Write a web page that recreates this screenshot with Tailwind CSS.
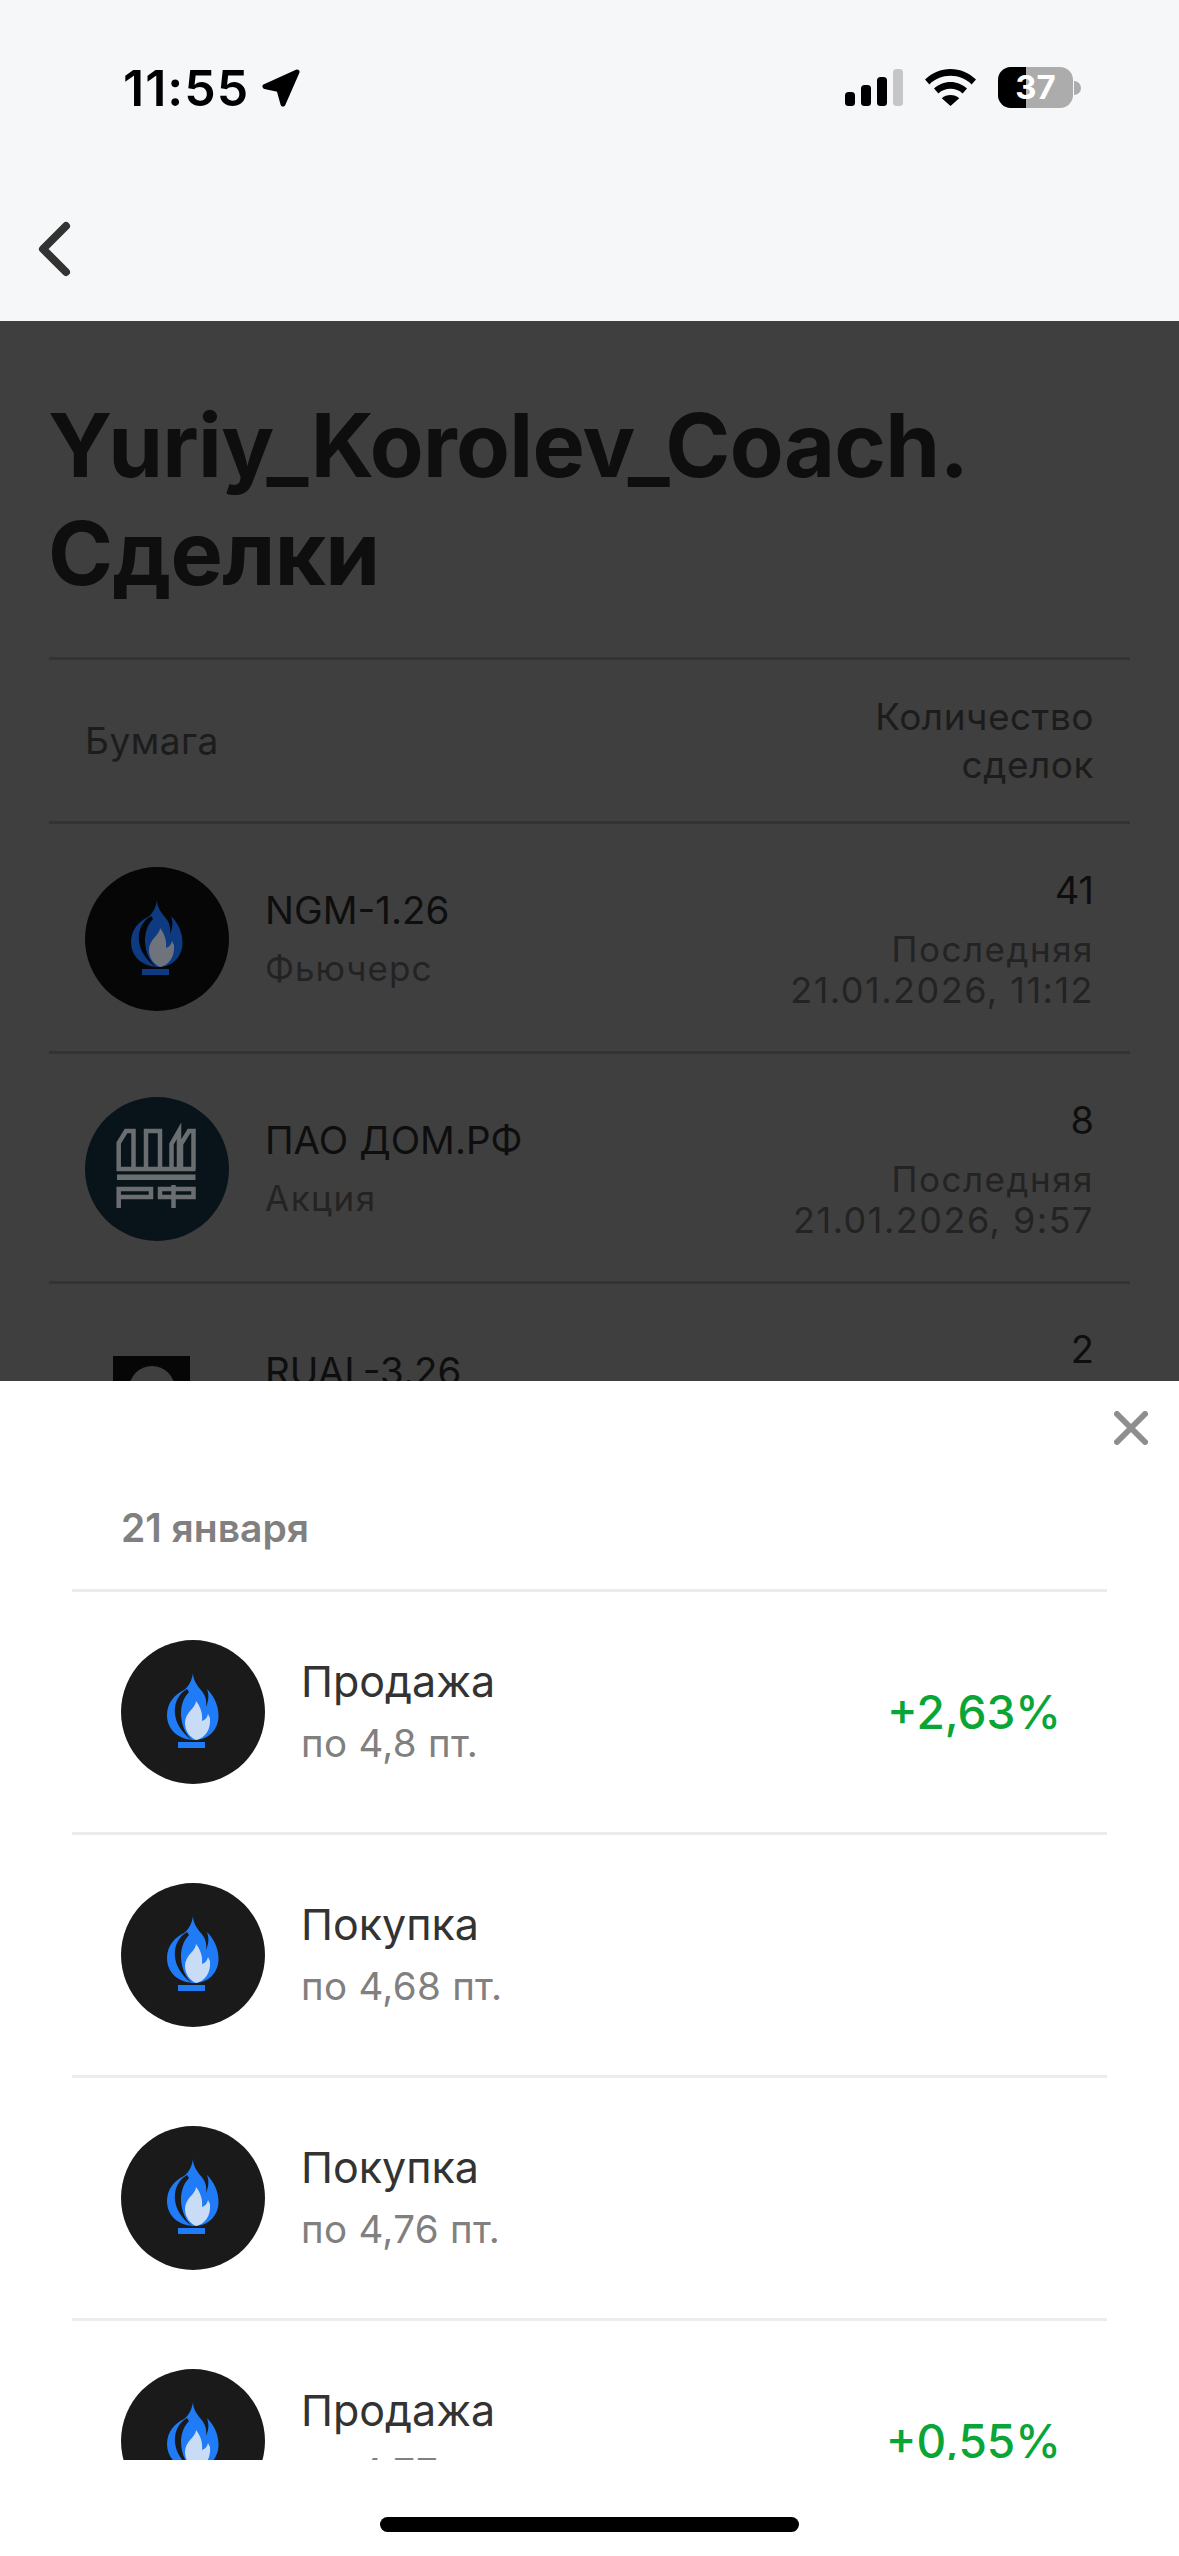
<!DOCTYPE html>
<html lang="ru">
<head>
  <meta charset="UTF-8" />
  <meta name="viewport" content="width=device-width, initial-scale=1.0" />
  <title>Сделки</title>
  <script src="https://cdn.jsdelivr.net/npm/@tailwindcss/browser@4"></script>
</head>
<body class="font-['Inter',sans-serif] bg-[#3f3f3f]">

  <svg class="hidden">
    <symbol id="flame" viewBox="0 0 144 144">
      <path fill="#1f7bf6" d="M72 33C72 40 76 45 79 49C84 54 86 60 85 67C88 60 88 55 86 49C93 56 98 66 97.5 77C97 90 87 100 74 100C58 100 46 90 46 75C46 63 54 54 63 50C68 46 71 40 72 33Z"/>
      <path fill="#1a1a1a" d="M66 49C50 58 48 84 71 100C58 88 56 64 68 52Z"/>
      <path fill="#c9dcf5" d="M75 61C75 68 64 72 64 83C64 92 70 98 75 100C84 98 90 90 89 78C88 76 87.5 75 87 74C86 78 84 80 81 81C82 73 79 66 75 61Z"/>
      <rect x="57" y="102" width="27" height="6" fill="#1f7bf6"/>
    </symbol>
    <symbol id="flame-dim" viewBox="0 0 144 144">
      <path fill="#0d3a80" d="M72 33C72 40 76 45 79 49C84 54 86 60 85 67C88 60 88 55 86 49C93 56 98 66 97.5 77C97 90 87 100 74 100C58 100 46 90 46 75C46 63 54 54 63 50C68 46 71 40 72 33Z"/>
      <path fill="#060606" d="M66 49C50 58 48 84 71 100C58 88 56 64 68 52Z"/>
      <path fill="#6f747c" d="M75 61C75 68 64 72 64 83C64 92 70 98 75 100C84 98 90 90 89 78C88 76 87.5 75 87 74C86 78 84 80 81 81C82 73 79 66 75 61Z"/>
      <rect x="57" y="102" width="27" height="6" fill="#0d3a80"/>
    </symbol>
  </svg>

  <div class="relative flex flex-col w-[1179px] h-[2556px] overflow-hidden">

    <!-- top bar -->
    <header class="h-[321px] shrink-0 bg-[#f6f7f9] relative">
      <div class="flex items-center justify-between h-[41px] absolute top-[67px] left-[123px] w-[958px]">
        <div class="flex items-center gap-[12px]">
          <span class="text-[50px] leading-none font-semibold text-black tracking-[1px]">11:55</span>
          <svg width="40" height="40" viewBox="0 0 40 40"><path fill="#000" stroke="#000" stroke-width="5" stroke-linejoin="round" d="M36 4L4 18.5L18 21.5L22 36Z"/></svg>
        </div>
        <div class="flex items-center">
          <svg width="58" height="37" viewBox="0 0 58 37" class="mr-[22px]">
            <rect x="0" y="23" width="10" height="14" rx="3.5" fill="#000"/>
            <rect x="16" y="16" width="10" height="21" rx="3.5" fill="#000"/>
            <rect x="32" y="8" width="10" height="29" rx="3.5" fill="#000"/>
            <rect x="48" y="0" width="10" height="37" rx="3.5" fill="#c6c6c8"/>
          </svg>
          <svg width="51" height="37" viewBox="0 0 51 37" class="mr-[22px]">
            <path fill="#000" d="M25.5 0C35 0 44 3.8 51 10.6L46.6 15.4C41 9.8 33.6 6.8 25.5 6.8S10 9.8 4.4 15.4L0 10.6C7 3.8 16 0 25.5 0Z"/>
            <path fill="#000" d="M25.5 13C31.8 13 37.4 15.4 42 19.6L37.6 24.4C34.3 21.4 30 19.8 25.5 19.8S16.7 21.4 13.4 24.4L9 19.6C13.6 15.4 19.2 13 25.5 13Z"/>
            <path fill="#000" d="M25.5 26C28.8 26 31.8 27.2 34.2 29.2L25.5 37L16.8 29.2C19.2 27.2 22.2 26 25.5 26Z"/>
          </svg>
          <div class="relative w-[75px] h-[41px] rounded-[13px] bg-[#acacac] overflow-hidden">
            <div class="w-[28px] h-full bg-black"></div>
            <span class="absolute inset-0 flex items-center justify-center text-[33px] leading-none font-bold text-white">37</span>
          </div>
          <div class="w-[7px] h-[14px] rounded-r-full bg-[#acacac] ml-[1px]"></div>
        </div>
      </div>
      <svg class="absolute left-[36px] top-[219px]" width="38" height="60" viewBox="0 0 38 60"><path fill="none" stroke="#333" stroke-width="8" stroke-linecap="round" stroke-linejoin="round" d="M30 7L7 30L30 53"/></svg>
    </header>

    <!-- dimmed page -->
    <main class="flex-1 px-[49px] pt-[70px] bg-[#3f3f3f]">
      <h1 class="ml-[-1px] text-[88px] leading-[108px] font-bold text-[#0e0e0e] tracking-[-0.7px]">Yuriy_Korolev_Coach.<br>Сделки</h1>

      <div class="mt-[50px] border-t-[3px] border-[#333333]">
        <div class="flex items-center justify-between h-[164px] px-[36px] border-b-[3px] border-[#333333] text-[37px] leading-[48px] text-[#1c1c1c] tracking-[0.5px]">
          <span>Бумага</span>
          <span class="text-right">Количество<br>сделок</span>
        </div>

        <div class="flex items-center h-[230px] pt-[3px] px-[36px] border-b-[3px] border-[#333333]">
          <div class="w-[144px] h-[144px] rounded-full bg-[#060606] shrink-0">
            <svg class="w-full h-full"><use href="#flame-dim"/></svg>
          </div>
          <div class="ml-[36px] flex-1">
            <div class="text-[38.5px] leading-[50px] text-[#0e0e0e]">NGM-1.26</div>
            <div class="mt-[8px] text-[35px] leading-[50px] text-[#232323] tracking-[1px]">Фьючерс</div>
          </div>
          <div class="text-right pb-[3px]">
            <div class="text-[38px] leading-[50px] text-[#0e0e0e]">41</div>
            <div class="mt-[14px] text-[35px] leading-[41px] text-[#232323] tracking-[1.5px]">Последняя</div>
            <div class="text-[36px] leading-[41px] text-[#232323] tracking-[1.5px]">21.01.2026, 11:12</div>
          </div>
        </div>

        <div class="flex items-center h-[230px] pt-[3px] px-[36px] border-b-[3px] border-[#333333]">
          <div class="w-[144px] h-[144px] rounded-full bg-[#08141a] shrink-0">
            <svg class="w-full h-full" viewBox="0 0 144 144" fill="none" stroke="#6b6e70" stroke-width="4.5">
              <path d="M33.7 72V46L41 34H48.5V72ZM61 34H75V72H61ZM86.5 72V47L94 34V72M96 72V47L104 34H108.5V72M32 72H110.5"/>
              <rect x="32" y="77.5" width="78.5" height="5.5" fill="#6b6e70" stroke="none"/>
              <path d="M33.7 111V92H66V100H33.7M75 92H108.5V100H75ZM88.5 88V111"/>
            </svg>
          </div>
          <div class="ml-[36px] flex-1">
            <div class="text-[38.5px] leading-[50px] text-[#0e0e0e]">ПАО ДОМ.РФ</div>
            <div class="mt-[8px] text-[35px] leading-[50px] text-[#232323] tracking-[1.5px]">Акция</div>
          </div>
          <div class="text-right pb-[3px]">
            <div class="text-[38px] leading-[50px] text-[#0e0e0e]">8</div>
            <div class="mt-[14px] text-[35px] leading-[41px] text-[#232323] tracking-[1.5px]">Последняя</div>
            <div class="text-[36px] leading-[41px] text-[#232323] tracking-[1.5px]">21.01.2026, 9:57</div>
          </div>
        </div>

        <div class="flex h-[230px] px-[36px]">
          <div class="w-[144px] shrink-0 pl-[28px] pt-[72px]">
            <div class="w-[77px] h-[77px] bg-[#060606] pt-[10px] flex justify-center">
              <div class="w-[46px] h-[46px] rounded-full bg-[#3f3f3f]"></div>
            </div>
          </div>
          <div class="ml-[36px] flex-1 pt-[62px]">
            <div class="text-[38.5px] leading-[50px] text-[#0e0e0e]">RUAL-3.26</div>
          </div>
          <div class="text-right pt-[40px]">
            <div class="text-[38px] leading-[50px] text-[#0e0e0e]">2</div>
          </div>
        </div>
      </div>
    </main>

    <!-- bottom sheet -->
    <section class="absolute left-0 right-0 bottom-0 h-[1175px] bg-white flex flex-col">
      <div class="relative h-[208px] shrink-0 px-[72px]">
        <svg class="absolute left-[1114px] top-[30px]" width="34" height="34" viewBox="0 0 34 34"><path stroke="#8e8e8e" stroke-width="6" stroke-linecap="round" d="M3 3L31 31M31 3L3 31"/></svg>
        <div class="pl-[49px] pt-[125px] text-[39px] leading-[44px] font-semibold text-[#808080]">21 января</div>
      </div>

      <div class="h-[871px] shrink-0 mx-[72px] overflow-hidden border-t-[3px] border-[#ececec]">
        <div class="flex items-center h-[243px] px-[49px] border-b-[3px] border-[#ececec]">
          <svg class="w-[144px] h-[144px] shrink-0 rounded-full bg-[#1a1a1a]"><use href="#flame"/></svg>
          <div class="ml-[36px] flex-1">
            <div class="text-[43px] leading-[50px] text-[#333333]">Продажа</div>
            <div class="mt-[12px] text-[38.5px] leading-[50px] tracking-[0.3px] text-[#808080]">по 4,8 пт.</div>
          </div>
          <div class="text-[46px] font-medium text-[#0aa537] mr-[-3px]">+2,63%</div>
        </div>
        <div class="flex items-center h-[243px] px-[49px] border-b-[3px] border-[#ececec]">
          <svg class="w-[144px] h-[144px] shrink-0 rounded-full bg-[#1a1a1a]"><use href="#flame"/></svg>
          <div class="ml-[36px] flex-1">
            <div class="text-[43px] leading-[50px] text-[#333333]">Покупка</div>
            <div class="mt-[12px] text-[38.5px] leading-[50px] tracking-[0.3px] text-[#808080]">по 4,68 пт.</div>
          </div>
        </div>
        <div class="flex items-center h-[243px] px-[49px] border-b-[3px] border-[#ececec]">
          <svg class="w-[144px] h-[144px] shrink-0 rounded-full bg-[#1a1a1a]"><use href="#flame"/></svg>
          <div class="ml-[36px] flex-1">
            <div class="text-[43px] leading-[50px] text-[#333333]">Покупка</div>
            <div class="mt-[12px] text-[38.5px] leading-[50px] tracking-[0.3px] text-[#808080]">по 4,76 пт.</div>
          </div>
        </div>
        <div class="flex items-center h-[243px] px-[49px] border-b-[3px] border-[#ececec]">
          <svg class="w-[144px] h-[144px] shrink-0 rounded-full bg-[#1a1a1a]"><use href="#flame"/></svg>
          <div class="ml-[36px] flex-1">
            <div class="text-[43px] leading-[50px] text-[#333333]">Продажа</div>
            <div class="mt-[12px] text-[38.5px] leading-[50px] tracking-[0.3px] text-[#808080]">по 4,77 пт.</div>
          </div>
          <div class="text-[46px] font-medium text-[#0aa537] mr-[-3px]">+0,55%</div>
        </div>
      </div>

      <div class="flex-1 flex justify-center pt-[57px]">
        <div class="w-[419px] h-[15px] rounded-full bg-black"></div>
      </div>
    </section>
  </div>
</body>
</html>
